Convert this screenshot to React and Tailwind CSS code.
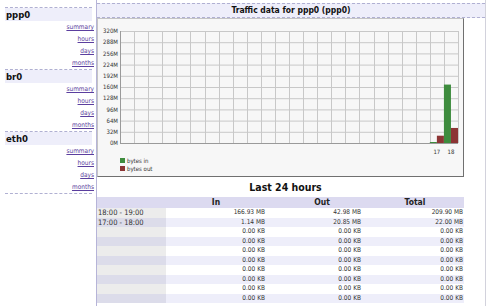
import React from 'react';

const IFACES = ['ppp0', 'br0', 'eth0'];
const LINKS = ['summary', 'hours', 'days', 'months'];

// hourly data, last column is the current hour (18)
const HOURS = [
  { label: '18:00 - 19:00', rx: '166.93 MB', tx: '42.98 MB', total: '209.90 MB' },
  { label: '17:00 - 18:00', rx: '1.14 MB', tx: '20.85 MB', total: '22.00 MB' },
  ...Array.from({ length: 8 }, () => ({ label: '', rx: '0.00 KB', tx: '0.00 KB', total: '0.00 KB' })),
];

const BARS = { 22: { rx: 1.14, tx: 20.85, label: '17' }, 23: { rx: 166.93, tx: 42.98, label: '18' } };

function Sidebar() {
  return (
    <aside className="w-[97px] shrink-0 border-r border-[#b6b4d8] pt-[7px] pl-[5px]">
      {IFACES.map((name) => (
        <div key={name} className="mr-[4px] border-t border-dashed border-[#b0b0d2]">
          <div className="h-[13px] bg-[#eeeefa] pl-[1px] text-[9.5px] font-bold leading-[13px] text-[#111]">{name}</div>
          <div className="mr-[-2px] flex flex-col items-end">
            {LINKS.map((l) => (
              <a key={l} href="#" className="h-[12px] whitespace-nowrap text-[6.5px] leading-[12px] text-[#5b3e9e] underline">
                {l}
              </a>
            ))}
          </div>
        </div>
      ))}
      <div className="mr-[4px] border-t border-dashed border-[#b0b0d2]" />
    </aside>
  );
}

function Chart() {
  const left = 22, right = 360, top = 12, bottom = 124;
  const cw = (right - left) / 24;
  const rh = (bottom - top) / 10;
  const scale = (bottom - top) / 320;
  return (
    <div className="h-[159px] w-[367px] border border-[#c4c4c4] border-r-[#707070] border-b-[#707070] bg-[#f7f7f7]">
      <svg width="365" height="157" viewBox="0 0 365 157" fontFamily="'DejaVu Sans Condensed', 'DejaVu Sans', sans-serif">
        {Array.from({ length: 11 }, (_, k) => (
          <g key={k}>
            <line x1={left} x2={right} y1={top + k * rh + 0.5} y2={top + k * rh + 0.5} stroke="#c8c8c8" />
            <text x={left - 2} y={top + k * rh + 2.2} fontSize="6" textAnchor="end" fill="#333">
              {(320 - k * 32) + 'M'}
            </text>
          </g>
        ))}
        {Array.from({ length: 25 }, (_, i) => (
          <line key={i} x1={Math.round(left + i * cw) + 0.5} x2={Math.round(left + i * cw) + 0.5} y1={top} y2={bottom} stroke="#c8c8c8" />
        ))}
        <line x1={left + 0.5} x2={left + 0.5} y1={top} y2={bottom} stroke="#9a9a9a" />
        <line x1={left} x2={right} y1={bottom + 0.5} y2={bottom + 0.5} stroke="#9a9a9a" />
        {Object.entries(BARS).map(([i, b]) => {
          const x = left + Number(i) * cw;
          const hIn = Math.max(1, b.rx * scale);
          const hOut = b.tx * scale;
          return (
            <g key={i}>
              <rect x={x} y={bottom - hIn} width={cw / 2} height={hIn} fill="#3e8c3e" />
              <rect x={x + cw / 2} y={bottom - hOut} width={cw / 2} height={hOut} fill="#8c3535" />
              <text x={x + cw / 2} y={134.5} fontSize="6" textAnchor="middle" fill="#333">{b.label}</text>
            </g>
          );
        })}
        <rect x="22" y="139" width="5" height="5" fill="#3e8c3e" />
        <text x="29" y="144" fontSize="6" fill="#333">bytes in</text>
        <rect x="22" y="147" width="5" height="5" fill="#8c3535" />
        <text x="29" y="152" fontSize="6" fill="#333">bytes out</text>
      </svg>
    </div>
  );
}

function HourTable() {
  return (
    <div className="w-[367px] text-[#333]">
      <div className="grid h-[11px] grid-cols-[69px_100px_100px_98px] bg-[#dcdaf0] text-[8.5px] font-bold leading-[11px] text-[#222]">
        <div />
        <div className="text-center">In</div>
        <div className="pl-[12px] text-center">Out</div>
        <div className="text-center">Total</div>
      </div>
      {HOURS.map((r, i) => (
        <div key={i} className="grid h-[9.5px] grid-cols-[69px_100px_100px_98px] text-[6.5px] leading-[9.5px]">
          <div className={`${i % 2 ? 'bg-[#dcdcea]' : 'bg-[#ececec]'} pl-[1px] text-[7.5px]`}>{r.label}</div>
          <div className={`${i % 2 ? 'bg-[#eeeefa]' : 'bg-white'} pr-[1px] text-right`}>{r.rx}</div>
          <div className={`${i % 2 ? 'bg-[#eeeefa]' : 'bg-white'} pr-[5px] text-right`}>{r.tx}</div>
          <div className={`${i % 2 ? 'bg-[#eeeefa]' : 'bg-white'} pr-[1px] text-right`}>{r.total}</div>
        </div>
      ))}
    </div>
  );
}

export default function App() {
  return (
    <div className="flex h-[306px] w-[500px] overflow-hidden bg-white font-['DejaVu_Sans_Condensed','DejaVu_Sans',sans-serif]">
      <Sidebar />
      <main className="w-[389px] shrink-0 border-r border-[#d2d2dc]">
        <div className="mt-[3px] h-[15px] border-y border-dashed border-[#b0b0d2] bg-[#eeeefa] text-center text-[8.5px] font-bold leading-[13px] text-[#111]">
          Traffic data for ppp0 (ppp0)
        </div>
        <Chart />
        <div className="flex h-[20px] w-[367px] items-end justify-center pb-[1px] pl-[10px] text-[10.5px] font-bold text-[#111]">
          Last 24 hours
        </div>
        <HourTable />
      </main>
    </div>
  );
}
